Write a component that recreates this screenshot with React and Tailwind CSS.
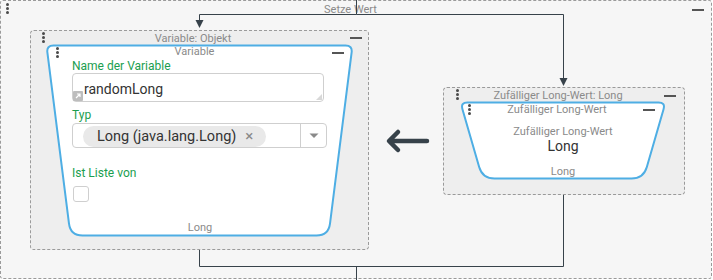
import React from 'react';

// rounded polygon path for the trapezoid block bodies
const unit = (a, p) => {
  const dx = a[0] - p[0];
  const dy = a[1] - p[1];
  const l = Math.hypot(dx, dy);
  return [dx / l, dy / l];
};

const roundedPath = (pts, r) => {
  let d = '';
  pts.forEach((p, i) => {
    const a = pts[(i - 1 + pts.length) % pts.length];
    const b = pts[(i + 1) % pts.length];
    const ua = unit(a, p);
    const ub = unit(b, p);
    const s = [p[0] + ua[0] * r[i], p[1] + ua[1] * r[i]];
    const e = [p[0] + ub[0] * r[i], p[1] + ub[1] * r[i]];
    d += (i === 0 ? 'M' : 'L') + s[0] + ' ' + s[1] + ' Q' + p[0] + ' ' + p[1] + ' ' + e[0] + ' ' + e[1] + ' ';
  });
  return d + 'Z';
};

const Dots = () => (
  <div className="flex flex-col gap-[1px] shrink-0">
    <span className="w-[3px] h-[3px] rounded-full bg-[#4a4a4a]" />
    <span className="w-[3px] h-[3px] rounded-full bg-[#4a4a4a]" />
    <span className="w-[3px] h-[3px] rounded-full bg-[#4a4a4a]" />
  </div>
);

const Minus = ({ className = '' }) => (
  <div className={`w-[12px] h-[2px] bg-[#555] shrink-0 ${className}`} />
);

const Trapezoid = ({ w, h, inset }) => (
  <svg className="absolute inset-0" width={w} height={h}>
    <path
      d={roundedPath(
        [
          [1.5, 1.5],
          [w - 1.5, 1.5],
          [w - 1.5 - inset, h - 1.5],
          [1.5 + inset, h - 1.5],
        ],
        [7, 7, 12, 12]
      )}
      fill="#fff"
      stroke="#4eaee4"
      strokeWidth="2"
    />
  </svg>
);

const Label = ({ children, className = '' }) => (
  <div className={`text-[12px] leading-[14px] text-[#1a9e4f] ${className}`}>{children}</div>
);

export default function App() {
  return (
    <div className="relative w-[713px] h-[280px] bg-white overflow-hidden font-['Roboto',sans-serif]">
      {/* Setze Wert */}
      <div className="absolute left-0 top-0 w-[712px] h-[279px] bg-[#f6f6f6] border border-dashed border-[#9a9a9a] rounded-[3px]">
        <div className="flex items-start pl-[5px] pr-[7px] pt-[2px]">
          <Dots />
          <div className="flex-1 text-center text-[11px] leading-[13px] text-[#8a8a8a]">Setze Wert</div>
          <Minus className="mt-[6px]" />
        </div>
      </div>

      {/* Variable: Objekt */}
      <div className="absolute left-[30px] top-[30px] w-[339px] h-[220px] bg-[#eeeeee] border border-dashed border-[#9a9a9a] rounded-[4px]">
        <div className="flex items-start pl-[11px] pr-[6px] pt-[1px]">
          <Dots />
          <div className="flex-1 text-center text-[11px] leading-[13px] text-[#8a8a8a] pr-[9px]">Variable: Objekt</div>
          <Minus className="mt-[5px]" />
        </div>

        <div className="relative ml-[14px] mt-[-1px] w-[309px] h-[193px]">
          <Trapezoid w={309} h={193} inset={24} />
          <div className="relative">
            <div className="flex items-start pl-[11px] pr-[10px] pt-[1px]">
              <div className="pt-[2px]"><Dots /></div>
              <div className="flex-1 text-center text-[11px] leading-[13px] text-[#8a8a8a] pr-[2px]">Variable</div>
              <Minus className="mt-[7px]" />
            </div>
            <div className="pl-[27px] pr-[30px]">
              <Label className="mt-[1px]">Name der Variable</Label>
              <div className="relative h-[29px] w-[252px] bg-white border border-[#cfcfcf] rounded-[4px]">
                <div className="text-[14px] leading-[16px] text-[#333] pl-[11px] pt-[7px]">randomLong</div>
                <div className="absolute left-0 bottom-0 w-[10px] h-[10px] bg-[#bdbdbd] rounded-[1px] flex items-center justify-center">
                  <svg width="8" height="8" viewBox="0 0 8 8">
                    <path d="M2 6 L6 2 M3 2 H6 V5" stroke="#fff" strokeWidth="1.2" fill="none" />
                  </svg>
                </div>
                <svg className="absolute right-[1px] bottom-[1px]" width="6" height="6" viewBox="0 0 6 6">
                  <path d="M6 0 L6 6 L0 6 Z" fill="#d8d8d8" />
                </svg>
              </div>
              <Label className="mt-[6px]">Typ</Label>
              <div className="flex items-center mt-[1px] h-[25px] w-[255px] bg-white border border-[#cfcfcf] rounded-[4px]">
                <div className="flex-1 pl-[10px]">
                  <div className="inline-flex items-center h-[21px] rounded-full bg-[#e9e9e9] pl-[14px] pr-[13px] text-[14.5px] text-[#333]">
                    Long (java.lang.Long)
                    <span className="ml-[9px] text-[#888] text-[15px] leading-none">×</span>
                  </div>
                </div>
                <div className="w-[26px] h-full border-l border-[#cfcfcf] flex items-center justify-center">
                  <svg width="10" height="6" viewBox="0 0 10 6">
                    <path d="M0.5 0.5 H9.5 L5 5 Z" fill="#8a8a8a" />
                  </svg>
                </div>
              </div>
              <Label className="mt-[18px]">Ist Liste von</Label>
              <div className="mt-[6px] ml-[1px] w-[16px] h-[16px] bg-white border border-[#cfcfcf] rounded-[3px]" />
              <div className="text-center text-[11px] leading-[13px] text-[#8a8a8a] mt-[19px] pl-[4px]">Long</div>
            </div>
          </div>
        </div>
      </div>

      {/* arrow */}
      <svg className="absolute left-[384px] top-[128px]" width="46" height="26" viewBox="0 0 46 26">
        <path d="M43 13 H6 M14 4 L5 13 L14 22" stroke="#37424a" strokeWidth="4.5" fill="none" strokeLinecap="round" strokeLinejoin="round" />
      </svg>

      {/* Zufälliger Long-Wert: Long */}
      <div className="absolute left-[443px] top-[87px] w-[242px] h-[108px] bg-[#eeeeee] border border-dashed border-[#9a9a9a] rounded-[4px]">
        <div className="flex items-start pl-[12px] pr-[8px] pt-[1px]">
          <Dots />
          <div className="flex-1 text-center text-[11px] leading-[13px] text-[#8a8a8a] pr-[7px]">Zufälliger Long-Wert: Long</div>
          <Minus className="mt-[6px]" />
        </div>

        <div className="relative ml-[15px] mt-[-1px] w-[208px] h-[79px]">
          <Trapezoid w={208} h={79} inset={22} />
          <div className="relative text-center">
            <div className="flex items-start pl-[9px] pr-[12px] pt-[2px]">
              <div className="pt-[1px]"><Dots /></div>
              <div className="flex-1 text-[11px] leading-[13px] text-[#8a8a8a]">Zufälliger Long-Wert</div>
              <Minus className="mt-[6px]" />
            </div>
            <div className="text-[11px] leading-[13px] text-[#8a8a8a] mt-[9px]">Zufälliger Long-Wert</div>
            <div className="text-[14px] leading-[16px] text-[#333]">Long</div>
            <div className="text-[11px] leading-[13px] text-[#8a8a8a] mt-[11px]">Long</div>
          </div>
        </div>
      </div>

      {/* connectors */}
      <svg className="absolute inset-0 pointer-events-none" width="713" height="280">
        <g stroke="#37424a" strokeWidth="1" fill="none">
          <path d="M356.5 0 V14.5 H199.5 V22" />
          <path d="M356.5 14.5 H563.5 V80" />
          <path d="M199.5 250 V266.5 H563.5 V195" />
          <path d="M356.5 266.5 V280" />
        </g>
        <path d="M195.5 20 H203.5 L199.5 28 Z" fill="#37424a" />
        <path d="M559.5 78 H567.5 L563.5 86 Z" fill="#37424a" />
      </svg>
    </div>
  );
}
